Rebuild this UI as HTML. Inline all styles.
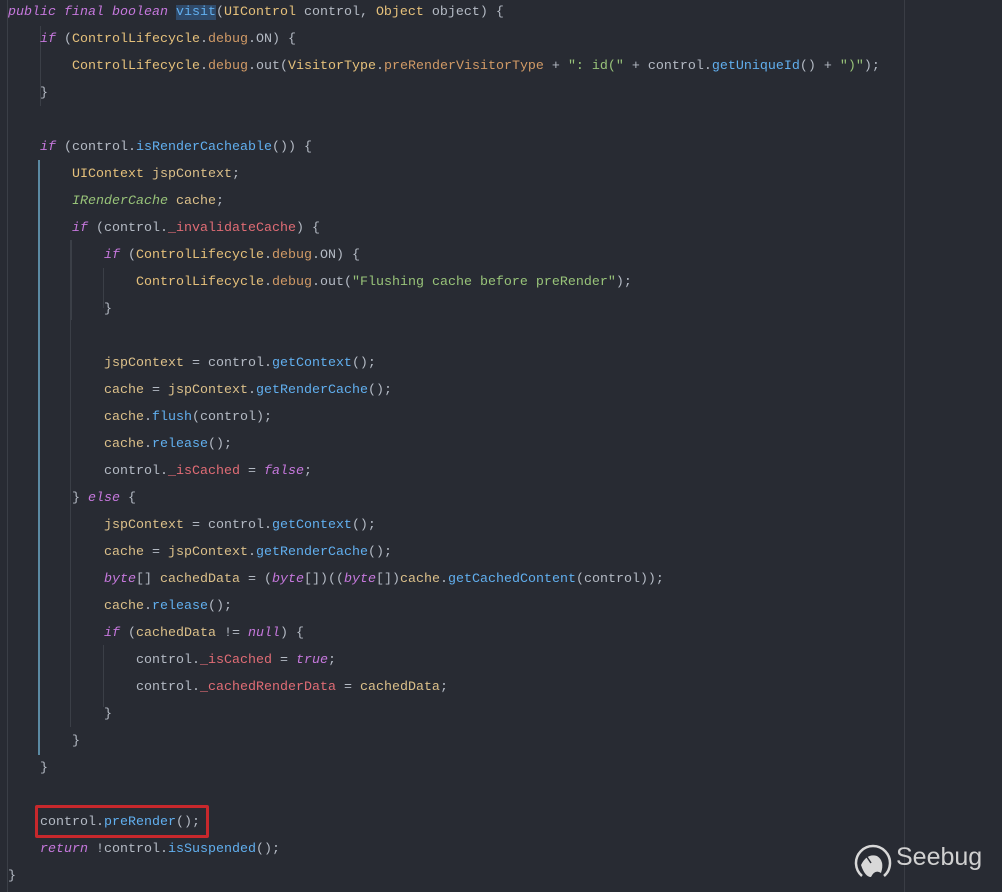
<!DOCTYPE html>
<html><head><meta charset="utf-8"><style>
html,body{margin:0;padding:0;}
body{width:1002px;height:892px;background:#282b33;overflow:hidden;position:relative;font-family:"Liberation Mono",monospace;}
pre{position:absolute;left:8px;top:-1px;margin:0;font-family:"Liberation Mono",monospace;font-size:13.33px;line-height:27px;color:#b4bac4;}
.k{color:#c678dd;font-style:italic}
.t{color:#e5c07b}
.g{color:#98c379;font-style:italic}
.f{color:#d19a66}
.m{color:#61afef}
.s{color:#98c379}
.r{color:#e06c75}
.v{color:#dcc08a}
.hl{background:#2f4a6a}
.gd{position:absolute;width:1px;background:#3b3f47}
.gb{position:absolute;width:2px;background:#5b8aa3}
</style></head><body>
<div class="gd" style="left:7px;top:0;height:892px"></div>
<div class="gd" style="left:40px;top:26px;height:80px"></div>
<div class="gb" style="left:38px;top:160px;height:595px"></div>
<div class="gd" style="left:71px;top:240px;height:80px"></div>
<div class="gd" style="left:70px;top:240px;height:487px"></div>
<div class="gd" style="left:103px;top:268px;height:40px"></div>
<div class="gd" style="left:103px;top:645px;height:62px"></div>
<div class="gd" style="left:904px;top:0;height:892px;background:#3a3d45"></div>
<pre><span class="k">public final boolean</span> <span class="m hl">visit</span>(<span class="t">UIControl</span> control, <span class="t">Object</span> object) {
    <span class="k">if</span> (<span class="t">ControlLifecycle</span>.<span class="f">debug</span>.ON) {
        <span class="t">ControlLifecycle</span>.<span class="f">debug</span>.out(<span class="t">VisitorType</span>.<span class="f">preRenderVisitorType</span> + <span class="s">": id("</span> + control.<span class="m">getUniqueId</span>() + <span class="s">")"</span>);
    }

    <span class="k">if</span> (control.<span class="m">isRenderCacheable</span>()) {
        <span class="t">UIContext</span> <span class="v">jspContext</span>;
        <span class="g">IRenderCache</span> <span class="v">cache</span>;
        <span class="k">if</span> (control.<span class="r">_invalidateCache</span>) {
            <span class="k">if</span> (<span class="t">ControlLifecycle</span>.<span class="f">debug</span>.ON) {
                <span class="t">ControlLifecycle</span>.<span class="f">debug</span>.out(<span class="s">"Flushing cache before preRender"</span>);
            }

            <span class="v">jspContext</span> = control.<span class="m">getContext</span>();
            <span class="v">cache</span> = <span class="v">jspContext</span>.<span class="m">getRenderCache</span>();
            <span class="v">cache</span>.<span class="m">flush</span>(control);
            <span class="v">cache</span>.<span class="m">release</span>();
            control.<span class="r">_isCached</span> = <span class="k">false</span>;
        } <span class="k">else</span> {
            <span class="v">jspContext</span> = control.<span class="m">getContext</span>();
            <span class="v">cache</span> = <span class="v">jspContext</span>.<span class="m">getRenderCache</span>();
            <span class="k">byte</span>[] <span class="v">cachedData</span> = (<span class="k">byte</span>[])((<span class="k">byte</span>[])<span class="v">cache</span>.<span class="m">getCachedContent</span>(control));
            <span class="v">cache</span>.<span class="m">release</span>();
            <span class="k">if</span> (<span class="v">cachedData</span> != <span class="k">null</span>) {
                control.<span class="r">_isCached</span> = <span class="k">true</span>;
                control.<span class="r">_cachedRenderData</span> = <span class="v">cachedData</span>;
            }
        }
    }

    control.<span class="m">preRender</span>();
    <span class="k">return</span> !control.<span class="m">isSuspended</span>();
}</pre>
<div style="position:absolute;left:35px;top:805px;width:168px;height:27px;border:3px solid #c8282c;border-radius:2px"></div>
<svg style="position:absolute;left:853px;top:843px" width="40" height="40" viewBox="0 0 40 40">
<path d="M9 33 A17 17 0 1 1 31 33" fill="none" stroke="#d8d8d8" stroke-width="2.5"/>
<path d="M8 22 Q14 10 24 13 Q32 18 28 30 Q22 26 18 34 Q12 34 8 22Z" fill="#d8d8d8"/>
<path d="M14 14 L18 20" stroke="#282b33" stroke-width="1.5"/>
</svg>
<div style="position:absolute;left:896px;top:843px;font-family:'Liberation Sans',sans-serif;font-size:25px;color:#d0d0d0;letter-spacing:0px">Seebug</div>
</body></html>
